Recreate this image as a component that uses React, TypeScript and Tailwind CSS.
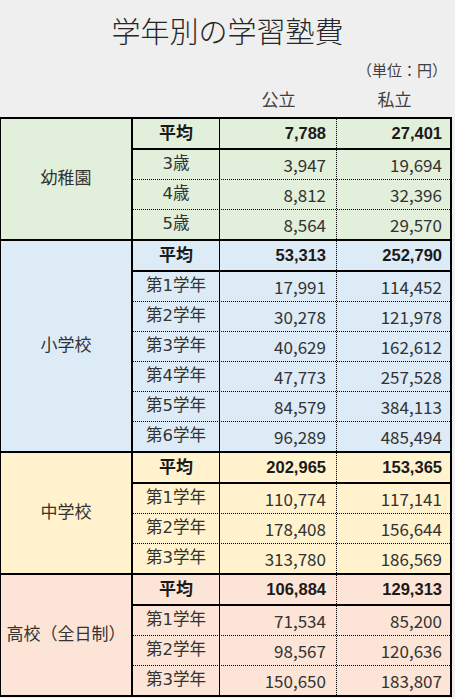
type Row = [string, string, string]

interface Group {
  name: string
  bg: string
  rows: Row[]
}

const groups: Group[] = [
  {
    name: '幼稚園',
    bg: 'bg-[#e2efda]',
    rows: [
      ['平均', '7,788', '27,401'],
      ['3歳', '3,947', '19,694'],
      ['4歳', '8,812', '32,396'],
      ['5歳', '8,564', '29,570'],
    ],
  },
  {
    name: '小学校',
    bg: 'bg-[#ddebf7]',
    rows: [
      ['平均', '53,313', '252,790'],
      ['第1学年', '17,991', '114,452'],
      ['第2学年', '30,278', '121,978'],
      ['第3学年', '40,629', '162,612'],
      ['第4学年', '47,773', '257,528'],
      ['第5学年', '84,579', '384,113'],
      ['第6学年', '96,289', '485,494'],
    ],
  },
  {
    name: '中学校',
    bg: 'bg-[#fff2cc]',
    rows: [
      ['平均', '202,965', '153,365'],
      ['第1学年', '110,774', '117,141'],
      ['第2学年', '178,408', '156,644'],
      ['第3学年', '313,780', '186,569'],
    ],
  },
  {
    name: '高校（全日制）',
    bg: 'bg-[#fce4d6]',
    rows: [
      ['平均', '106,884', '129,313'],
      ['第1学年', '71,534', '85,200'],
      ['第2学年', '98,567', '120,636'],
      ['第3学年', '150,650', '183,807'],
    ],
  },
]

function GroupBlock({ group, last }: { group: Group; last: boolean }) {
  return (
    <div className={`flex ${group.bg} ${last ? '' : 'border-b-2 border-black'}`}>
      <div className="w-[132px] shrink-0 border-r-2 border-black flex items-center justify-center text-[17px] text-[#333]">
        {group.name}
      </div>
      <div className="flex-1 flex flex-col">
        {group.rows.map((r, i) => {
          const avg = i === 0
          const isLast = i === group.rows.length - 1
          const sep = avg
            ? 'border-b-2 border-black'
            : isLast
              ? ''
              : 'border-b border-dotted border-black'
          const label = avg ? 'font-bold text-[17px] text-[#1a1a1a]' : 'text-[16.5px] text-[#333]'
          const num = avg
            ? "font-bold text-[16.5px] text-[#1a1a1a] font-['Liberation_Sans',sans-serif]"
            : "text-[17px] text-[#333] font-['Noto_Sans_CJK_JP',sans-serif]"
          return (
            <div key={r[0]} className={`grid grid-cols-[86px_117px_1fr] h-[29px] box-content ${sep}`}>
              <div className={`flex items-center justify-center ${label}`}>{r[0]}</div>
              <div className={`flex items-center justify-end pr-[10px] border-l border-black ${num}`}>
                {r[1]}
              </div>
              <div className={`flex items-center justify-end pr-[8px] border-l border-dotted border-black ${num}`}>
                {r[2]}
              </div>
            </div>
          )
        })}
      </div>
    </div>
  )
}

export default function App() {
  return (
    <div className="w-[455px] h-[698px] bg-[#efefef] font-['DejaVu_Sans','Noto_Sans_CJK_JP',sans-serif] overflow-hidden">
      <div className="h-[117px] flex flex-col">
        <h1 className="pt-[12px] text-center text-[29px] leading-[36px] font-light text-[#262626] font-['Noto_Sans_CJK_JP',sans-serif]">
          学年別の学習塾費
        </h1>
        <div className="mt-[12px] pr-[8px] text-right text-[15px] leading-[20px] text-[#404040] font-['Noto_Sans_CJK_JP',sans-serif]">
          （単位：円）
        </div>
        <div className="mt-[9px] grid grid-cols-[220px_117px_115px] text-[17px] leading-[22px] text-[#404040]">
          <div />
          <div className="text-center">公立</div>
          <div className="text-center">私立</div>
        </div>
      </div>
      <div className="w-[452px] border-2 border-l border-black">
        {groups.map((g, i) => (
          <GroupBlock key={g.name} group={g} last={i === groups.length - 1} />
        ))}
      </div>
    </div>
  )
}
